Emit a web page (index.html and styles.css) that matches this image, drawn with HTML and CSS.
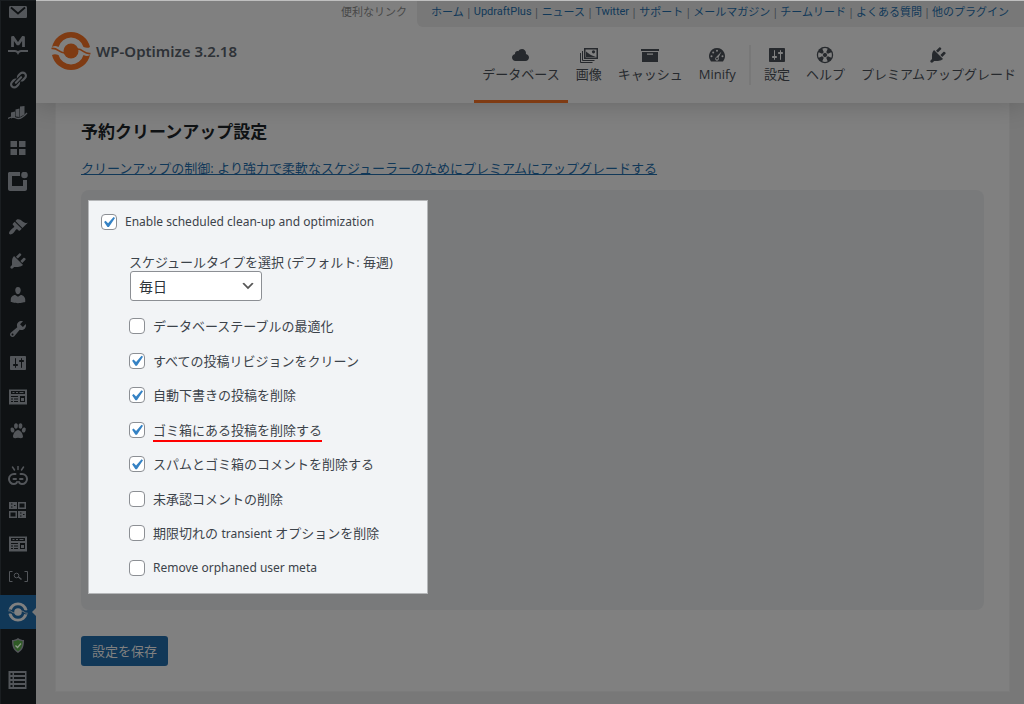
FILE: index.html
```html
<!DOCTYPE html>
<html lang="ja">
<head>
<meta charset="utf-8">
<meta name="viewport" content="width=device-width, initial-scale=1">
<title>WP-Optimize</title>
<link rel="stylesheet" href="styles.css">
</head>
<body>
<svg class="sprite" aria-hidden="true">
  <symbol id="plug" viewBox="0 0 20 20"><path d="M13.11 4.36L9.87 7.6 8 5.73l3.24-3.24c.35-.34 1.05-.2 1.56.32.52.51.66 1.21.31 1.55zm-8 1.77l.91-1.12 9.01 9.01-1.19.84c-.71.71-2.63 1.16-3.82 1.16H6.14L4.9 17.26c-.59.59-1.54.59-2.12 0-.59-.58-.59-1.53 0-2.12l1.24-1.24v-3.88c0-1.13.4-3.19 1.09-3.89zm7.26 3.97l3.24-3.24c.34-.35 1.04-.21 1.55.31.52.51.66 1.21.31 1.55l-3.24 3.25z"/></symbol>
  <symbol id="sliders" viewBox="0 0 20 20"><path d="M18 16V4c0-.55-.45-1-1-1H3c-.55 0-1 .45-1 1v12c0 .55.45 1 1 1h14c.55 0 1-.45 1-1zM8 11h1c.55 0 1 .45 1 1s-.45 1-1 1H8v1.5c0 .28-.22.5-.5.5s-.5-.22-.5-.5V13H6c-.55 0-1-.45-1-1s.45-1 1-1h1V5.5c0-.28.22-.5.5-.5s.5.22.5.5V11zm5-2h-1c-.55 0-1-.45-1-1s.45-1 1-1h1V5.5c0-.28.22-.5.5-.5s.5.22.5.5V7h1c.55 0 1 .45 1 1s-.45 1-1 1h-1v5.5c0 .28-.22.5-.5.5s-.5-.22-.5-.5V9z"/></symbol>
  <symbol id="form" viewBox="0 0 20 20"><path fill-rule="evenodd" d="M1 2.500h18v15H1zM3 4v3h14V4zM4.500 5h2v1h-2zM8 5h2v1H8zM11.500 5h4v1h-4zM3 9v1h7V9zM3 11.500v1h2v-1zM6 11.500v1h4v-1zM3 14v1h2v-1zM6 14v1h4v-1zM12 9v6h5V9zM13 11h3v3h-3z"/></symbol>
  <symbol id="optimize" viewBox="0 0 40 40"><path d="M1 16A19.500 19.500 0 0 1 39 16C37 17.200 35 17 32.500 16A13 13 0 0 0 7.500 16C5 14.800 3 14.800 1 16zM39 24A19.500 19.500 0 0 1 1 24C3 22.800 5 23 7.500 24A13 13 0 0 0 32.500 24C35 25.200 37 25.200 39 24z"/><circle cx="20" cy="20" r="7.500"/><path d="M.5 17.500C7 16.500 8 22.500 14 22M39.500 22.500C33 23.500 32 17.500 26 18" fill="none" stroke="currentColor" stroke-width="1.600"/></symbol>
</svg>
<div class="shell">
  <nav class="side" aria-label="管理メニュー">
    <ul class="side-list">
      <li><a href="#" aria-label="メール"><svg viewBox="0 0 20 20"><path d="M2.500 4h15c.8 0 1.500.5 1.500 1.500v9c0 1-.7 1.500-1.500 1.500h-15C1.500 16 1 15.500 1 14.500v-9C1 4.500 1.500 4 2.500 4z"/><path d="M3 5.500l7 6 7-6" fill="none" stroke="#0f1214" stroke-width="1.800"/></svg></a></li>
      <li><a href="#" aria-label="M"><svg viewBox="0 0 20 20"><path d="M4.500 11V0.500l5.500 8 5.500-8V11" fill="none" stroke="currentColor" stroke-width="2.800" stroke-linejoin="bevel"/><path d="M0 15h7c1.500 0 2.500 1 3 2 .5-1 1.500-2 3-2h7" fill="none" stroke="currentColor" stroke-width="1.800"/></svg></a></li>
      <li><a href="#" aria-label="リンク"><svg viewBox="0 0 20 20"><path d="M17.740 2.760c1.680 1.690 1.680 4.410 0 6.100l-1.530 1.520c-1.120 1.120-2.700 1.470-4.140 1.090l2.620-2.610.76-.77.76-.76c.84-.84.84-2.200 0-3.040-.84-.85-2.200-.85-3.040 0l-.77.76-3.380 3.380c-.37-1.440-.02-3.020 1.100-4.140l1.520-1.530c1.690-1.680 4.420-1.680 6.100 0zM8.590 13.430l5.340-5.340c.42-.42.42-1.100 0-1.520-.44-.43-1.130-.39-1.530 0l-5.330 5.340c-.42.42-.42 1.100 0 1.520.44.43 1.130.39 1.520 0zm-.76 2.290l4.140-4.150c.38 1.440.03 3.020-1.090 4.140l-1.520 1.530c-1.690 1.680-4.410 1.680-6.100 0-1.680-1.680-1.680-4.420 0-6.100l1.530-1.520c1.120-1.120 2.700-1.470 4.140-1.100l-4.140 4.150c-.85.84-.85 2.200 0 3.050.84.84 2.200.84 3.040 0z"/></svg></a></li>
      <li><a href="#" aria-label="統計"><svg viewBox="0 0 20 20"><path d="M3 8.500l4-1V13l-4 1.500zM7.500 5.500l4-1V13l-4-.5zM12 2.500l4.500-.5v8.500L12 13z"/><path d="M0 14.500c3-2 5-2 8-.5s6 .5 11-5" fill="none" stroke="currentColor" stroke-width="1.300"/></svg></a></li>
      <li><a href="#" aria-label="ブロック"><svg viewBox="0 0 20 20"><path d="M2.500 3H9v6H2.500zM11 3h6.500v6H11zM2.500 11H9v6H2.500zM11 11h6.500v6H11z"/></svg></a></li>
      <li><a href="#" aria-label="通知"><svg viewBox="0 0 20 20"><path d="M1 0h11v4H4v10h11V8h4v9c0 1-1 2-2 2H2c-1 0-2-1-2-2V1z"/><circle cx="16.500" cy="3" r="3.300"/></svg></a></li>
      <li class="side-break"><a href="#" aria-label="外観"><svg viewBox="0 0 20 20"><path d="M14.480 11.060L7.410 3.990l1.500-1.500c.5-.56 2.300-.47 3.510.32 1.210.8 1.430 1.280 2.910 2.100 1.180.64 2.450 1.260 4.450.85zm-.71.71L6.700 4.700 4.930 6.470c-.39.39-.39 1.020 0 1.410l1.060 1.060c.39.39.39 1.030 0 1.420-.6.6-1.430 1.110-2.210 1.690-.35.26-.7.53-1.010.84C1.430 14.230.4 16.080 1.400 17.070c.99 1 2.840-.03 4.180-1.360.31-.31.58-.66.85-1.020.57-.78 1.080-1.610 1.690-2.210.39-.39 1.020-.39 1.410 0l1.060 1.060c.39.39 1.020.39 1.410 0z"/></svg></a></li>
      <li><a href="#" aria-label="プラグイン"><svg><use href="#plug"/></svg></a></li>
      <li><a href="#" aria-label="ユーザー"><svg viewBox="0 0 20 20"><path d="M10 9.250c-2.270 0-2.730-3.440-2.730-3.440C7 4.020 7.820 2 9.970 2c2.160 0 2.980 2.020 2.710 3.810 0 0-.41 3.440-2.680 3.440zm0 2.570L12.720 10c2.390 0 4.520 2.330 4.520 4.530v2.490s-3.650 1.130-7.240 1.130c-3.650 0-7.240-1.130-7.240-1.130v-2.490c0-2.250 1.940-4.480 4.470-4.480z"/></svg></a></li>
      <li><a href="#" aria-label="ツール"><svg viewBox="0 0 20 20"><path d="M16.680 9.770c-1.340 1.340-3.300 1.670-4.950.99l-5.410 6.520c-.99.99-2.590.99-3.580 0s-.99-2.590 0-3.570l6.520-5.420c-.68-1.650-.35-3.610.99-4.950 1.280-1.280 3.120-1.620 4.720-1.060l-2.890 2.890 2.820 2.820 2.860-2.870c.53 1.580.18 3.390-1.080 4.650zM3.810 16.210c.4.390 1.040.39 1.430 0 .4-.4.4-1.040 0-1.430-.39-.4-1.030-.4-1.430 0-.39.39-.39 1.030 0 1.430z"/></svg></a></li>
      <li><a href="#" aria-label="設定"><svg><use href="#sliders"/></svg></a></li>
      <li><a href="#" aria-label="フォーム"><svg><use href="#form"/></svg></a></li>
      <li><a href="#" aria-label="パウ"><svg viewBox="0 0 20 20"><ellipse cx="4.500" cy="9" rx="1.900" ry="2.600" transform="rotate(-20 4.500 9)"/><ellipse cx="8" cy="5" rx="1.900" ry="2.800"/><ellipse cx="12.500" cy="5" rx="1.900" ry="2.800"/><ellipse cx="15.800" cy="9" rx="1.900" ry="2.600" transform="rotate(20 15.800 9)"/><path d="M10 9c2.500 0 5 4 5 6.500 0 2-2 1.800-5 1.300-3 .5-5 .7-5-1.300C5 13 7.500 9 10 9z"/></svg></a></li>
      <li class="side-break"><a href="#" aria-label="リンク切れ"><svg viewBox="0 0 20 20"><g fill="none" stroke="currentColor" stroke-width="2" stroke-linecap="round"><path d="M7.500 8H6a5 5 0 0 0-5 4.800A5 5 0 0 0 6 18c1.500 0 2.500-.5 3-2M12.500 8H14a5 5 0 0 1 5 4.800A5 5 0 0 1 14 18c-1.500 0-2.500-.5-3-2M5.500 13H8M12 13h2.500"/><path d="M10 0v3.500M4.500 1l2 3M15.500 1l-2 3" stroke-width="1.500"/></g></svg></a></li>
      <li><a href="#" aria-label="コード"><svg viewBox="0 0 20 20"><path fill-rule="evenodd" d="M1 2h8v7H1zM3 3.500v1h1.500v-1zM6 5v1h1.500V5zM3 6.500v1h1.500v-1zM10 2h8v7h-8zM11.500 3.500v4h5v-4zM1 11h8v7H1zM2.500 12.500v4h5v-4zM10 11h8v7h-8zM12 12.500v1h1.500v-1zM15 14v1h1.500v-1zM12 15.500v1h1.500v-1z"/></svg></a></li>
      <li><a href="#" aria-label="一覧フォーム"><svg><use href="#form"/></svg></a></li>
      <li><a href="#" aria-label="検索"><svg viewBox="0 0 20 20"><g fill="none" stroke="currentColor"><path d="M4.500 3.500h-3v10h3M16.500 3.500h3v10h-3"/><circle cx="8.500" cy="7.500" r="2.300"/><path d="M10.500 9l3 2.500" stroke-width="1.500"/></g></svg></a></li>
      <li class="side-current"><a href="#" aria-label="WP-Optimize" aria-current="page"><svg><use href="#optimize"/></svg></a></li>
      <li><a href="#" aria-label="セキュリティ"><svg viewBox="0 0 20 20"><path d="M10 2c2 1.500 4 2 6 2 0 6-1 10-6 13-5-3-6-7-6-13 2 0 4-.5 6-2z"/><path d="M10 3.800c1.500 1 3 1.300 4.500 1.400 0 4.500-1 7.800-4.500 10-3.500-2.200-4.500-5.500-4.500-10C7 5.100 8.500 4.800 10 3.800z" fill="#2f5a26"/><path d="M7.500 9.500l2 2 3.500-4" fill="none" stroke="#8c9a88" stroke-width="1.200"/></svg></a></li>
      <li><a href="#" aria-label="リスト"><svg viewBox="0 0 20 20"><path fill-rule="evenodd" d="M.5 1h18v18H.5zM2.500 3v2h2V3zM6 3v2h11V3zM2.500 7v2h2V7zM6 7v2h11V7zM2.500 11v2h2v-2zM6 11v2h11v-2zM2.500 15v2h2v-2zM6 15v2h11v-2z"/></svg></a></li>
    </ul>
  </nav>
  <div class="main">
    <header class="header">
      <div class="brand">
        <svg class="brand-logo" aria-hidden="true"><use href="#optimize"/></svg>
        <strong class="brand-name">WP-Optimize 3.2.18</strong>
      </div>
      <div class="header-right">
        <div class="useful">
          <span class="useful-label">便利なリンク</span>
          <div class="useful-links">
            <a href="#">ホーム</a> | <a class="useful-latin" href="#">UpdraftPlus</a> | <a href="#">ニュース</a> | <a class="useful-latin" href="#">Twitter</a> | <a href="#">サポート</a> | <a href="#">メールマガジン</a> | <a href="#">チームリード</a> | <a href="#">よくある質問</a> | <a href="#">他のプラグイン</a>
          </div>
        </div>
        <nav class="tabs" aria-label="WP-Optimize">
          <a class="tab tab-active" href="#"><svg viewBox="0 0 20 20"><path d="M14.900 9c1.800.2 3.100 1.700 3.100 3.500 0 1.900-1.600 3.500-3.500 3.500h-10C2.600 16 1 14.400 1 12.500 1 10.700 2.300 9.300 4.100 9 4 8.900 4 8.700 4 8.500 4 7.100 5.100 6 6.500 6c.3 0 .7.1.9.2C8.100 4.900 9.400 4 11 4c2.200 0 4 1.800 4 4 0 .4-.1.7-.1 1z"/></svg>データベース</a>
          <a class="tab" href="#"><svg viewBox="0 0 20 20"><path d="M1.500 8v9.500h12M3.500 6v9.500h12" fill="none" stroke="currentColor"/><path fill-rule="evenodd" d="M5 3h14v11H5zM6.500 4.500v8h11v-8z"/><path d="M7 12V6.500l4 3 2 1 4 1.500z"/><circle cx="14.500" cy="6.800" r="1.600"/></svg>画像</a>
          <a class="tab" href="#"><svg viewBox="0 0 20 20"><path fill-rule="evenodd" d="M1 4h18v2H1zM2 7h16v10H2zM7 8.500v1.200h6V8.500z"/></svg>キャッシュ</a>
          <a class="tab" href="#"><svg viewBox="0 0 20 20"><path d="M10 3a8.200 8.200 0 0 0-6 13.500h12A8.200 8.200 0 0 0 10 3z"/><g fill="#808080"><circle cx="10" cy="5.800" r="1"/><circle cx="6.200" cy="7.500" r="1"/><circle cx="4.500" cy="11.200" r="1"/><circle cx="15.500" cy="11.200" r="1"/><path d="M14.500 6.500l-3 6c1 2-.2 3.200-1.500 3.200s-2.500-1.500-1.500-3z"/></g><circle cx="10" cy="13.500" r="1"/></svg>Minify</a>
          <span class="tab-divider"></span>
          <a class="tab" href="#"><svg><use href="#sliders"/></svg>設定</a>
          <a class="tab" href="#"><svg viewBox="0 0 20 20"><circle cx="10" cy="10" r="8.200"/><g fill="#808080"><path d="M8.700 7L7.300 3.700c1.500-.8 3.900-.8 5.400 0L11.300 7zM8.700 13l-1.400 3.300c1.500.8 3.900.8 5.400 0L11.300 13zM7 8.700L3.700 7.300c-.8 1.500-.8 3.900 0 5.400L7 11.300zM13 8.700l3.300-1.400c.8 1.500.8 3.900 0 5.400L13 11.300z"/></g><circle cx="10" cy="10" r="2.600" fill="none" stroke="#808080" stroke-width="1"/></svg>ヘルプ</a>
          <a class="tab" href="#"><svg><use href="#plug"/></svg>プレミアムアップグレード</a>
        </nav>
      </div>
    </header>
    <main class="card">
      <h1 class="title">予約クリーンアップ設定</h1>
      <p class="upsell"><a href="#">クリーンアップの制御: より強力で柔軟なスケジューラーのためにプレミアムにアップグレードする</a></p>
      <form>
        <div class="panel">
          <div class="spot">
            <label class="check"><input type="checkbox" checked><span class="latin">Enable scheduled clean-up and optimization</span></label>
            <div class="options">
              <label class="select-label" for="schedule">スケジュールタイプを選択 (デフォルト: 毎週)</label>
              <div class="select-wrap">
                <select id="schedule"><option>毎日</option><option>毎週</option></select>
                <svg viewBox="0 0 20 20" aria-hidden="true"><path d="M5 6l5 5 5-5 2 1-7 7-7-7z"/></svg>
              </div>
              <div class="checks">
                <label class="check"><input type="checkbox"><span>データベーステーブルの最適化</span></label>
                <label class="check"><input type="checkbox" checked><span>すべての投稿リビジョンをクリーン</span></label>
                <label class="check"><input type="checkbox" checked><span>自動下書きの投稿を削除</span></label>
                <label class="check"><input type="checkbox" checked><span class="marked">ゴミ箱にある投稿を削除する</span></label>
                <label class="check"><input type="checkbox" checked><span>スパムとゴミ箱のコメントを削除する</span></label>
                <label class="check"><input type="checkbox"><span>未承認コメントの削除</span></label>
                <label class="check"><input type="checkbox"><span>期限切れの <span class="latin">transient</span> オプションを削除</span></label>
                <label class="check"><input type="checkbox"><span class="latin">Remove orphaned user meta</span></label>
              </div>
            </div>
          </div>
        </div>
        <button class="save" type="submit">設定を保存</button>
      </form>
    </main>
  </div>
</div>
</body>
</html>
```
FILE: styles.css
```css
* { box-sizing: border-box; }

body {
  margin: 0;
  background: #787878;
  color: #3c434a;
  font: 13px/20px "Open Sans", "Noto Sans CJK JP", sans-serif;
}

a { color: #113858; }
svg { fill: currentColor; }
.sprite { position: absolute; width: 0; height: 0; }

.shell { display: flex; min-height: 100vh; }

/* Side menu */
.side {
  flex: 0 0 36px;
  background: #0f1214;
  box-shadow: inset 1px 1px #1a1e21;
}
.side-list { list-style: none; margin: -5px 0 0; padding: 0; }
.side-list a {
  display: flex;
  align-items: center;
  justify-content: center;
  height: 34px;
  color: #53565a;
}
.side-list svg { width: 20px; height: 20px; }
.side-break { margin-top: 11px; }
.side-current { position: relative; background: #113858; }
.side-list .side-current a { color: #808080; }
.side-current::after {
  content: "";
  position: absolute;
  right: 0;
  top: 13px;
  border: 4px solid transparent;
  border-left-width: 0;
  border-right-color: #787878;
}

.main { flex: 1; min-width: 0; display: flex; flex-direction: column; }

/* Header */
.header {
  position: relative;
  display: flex;
  justify-content: space-between;
  height: 103px;
  background: #808080;
  border-top: 1px solid #bfbfbf;
  box-shadow: 0 0 25px rgba(0, 0, 0, 0.22);
  clip-path: inset(0 0 -40px 0);
}
.brand { display: flex; align-items: center; gap: 5px; height: 100px; padding-left: 15px; }
.brand-logo { width: 40px; height: 40px; color: #7f3b13; }
.brand-name { color: #2e3237; font: 600 15px/24px "Noto Sans", sans-serif; }
.header-right { display: flex; flex-direction: column; align-items: flex-end; justify-content: space-between; }
.useful { display: flex; font-size: 11px; line-height: 22px; white-space: nowrap; }
.useful-label { padding-right: 10px; color: #484848; }
.useful-links { display: flex; gap: 2px; height: 26px; padding: 0 15px 0 14px; background: #787878; border-bottom-left-radius: 6px; }
.useful-links a { text-decoration: none; }
.useful-latin { font-family: Roboto, sans-serif; }

.tabs { display: flex; align-items: flex-start; white-space: nowrap; }
.tab {
  display: flex;
  flex-direction: column;
  align-items: center;
  height: 58px;
  padding: 0 8px;
  border-bottom: 3px solid transparent;
  color: #26292d;
  line-height: 18px;
  text-decoration: none;
}
.tab svg { width: 20px; height: 20px; }
.tab-active { border-color: #7f3b13; }
.tab-divider { width: 2px; height: 40px; margin: 0 5px; background: #787878; }

/* Content */
.card {
  margin: 0 15px 13px 20px;
  padding: 16px 25px 25px;
  background: #808080;
  box-shadow: 0 0 0 1px #7b7b7b;
}
.title { margin: 0; color: #0f1214; font-size: 17px; line-height: 26px; }
.upsell { margin: 13px 0 12px; }
.panel { padding: 10px 7px 16px; background: #797a7b; border-radius: 8px; }
.spot {
  width: 340px;
  max-width: 100%;
  padding: 11px 12px 8px;
  background: #f2f4f6;
  border: 1px solid #b5b7b9;
}
.latin { font-family: "Noto Sans", sans-serif; font-size: 12px; }
.options { padding: 21px 0 0 28px; }
.select-label { display: block; line-height: 18px; }
.select-wrap { display: grid; width: 132px; margin: 0 0 8px 1px; }
.select-wrap select {
  grid-area: 1 / 1;
  height: 30px;
  padding: 0 24px 0 8px;
  appearance: none;
  background: #fff;
  border: 1px solid #8c8f94;
  border-radius: 3px;
  color: #2c3338;
  font: 14px/28px "Noto Sans CJK JP", sans-serif;
}
.select-wrap svg {
  grid-area: 1 / 1;
  align-self: center;
  justify-self: end;
  width: 16px;
  height: 16px;
  margin-right: 6px;
  fill: #555;
  pointer-events: none;
}
.checks { display: grid; grid-auto-rows: 1fr; height: 276px; }
.check { display: flex; align-items: center; gap: 8px; white-space: nowrap; }
.check input {
  appearance: none;
  flex: none;
  width: 16px;
  height: 16px;
  margin: 0;
  background: #fff;
  border: 1px solid #8c8f94;
  border-radius: 4px;
}
.check input:checked::before {
  content: "";
  display: block;
  width: 21px;
  height: 21px;
  margin: -3px -4px;
  background: #3582c4;
  clip-path: polygon(74% 24%, 81% 29%, 52% 71%, 45% 71%, 29% 48%, 36% 42%, 48% 54%);
}
.marked { box-shadow: 0 2px #f00; }

.save {
  display: block;
  height: 30px;
  margin-top: 26px;
  padding: 0 11px;
  background: #113858;
  border: 0;
  border-radius: 3px;
  color: #808080;
  font: 13px/30px "Noto Sans CJK JP", sans-serif;
}
```
